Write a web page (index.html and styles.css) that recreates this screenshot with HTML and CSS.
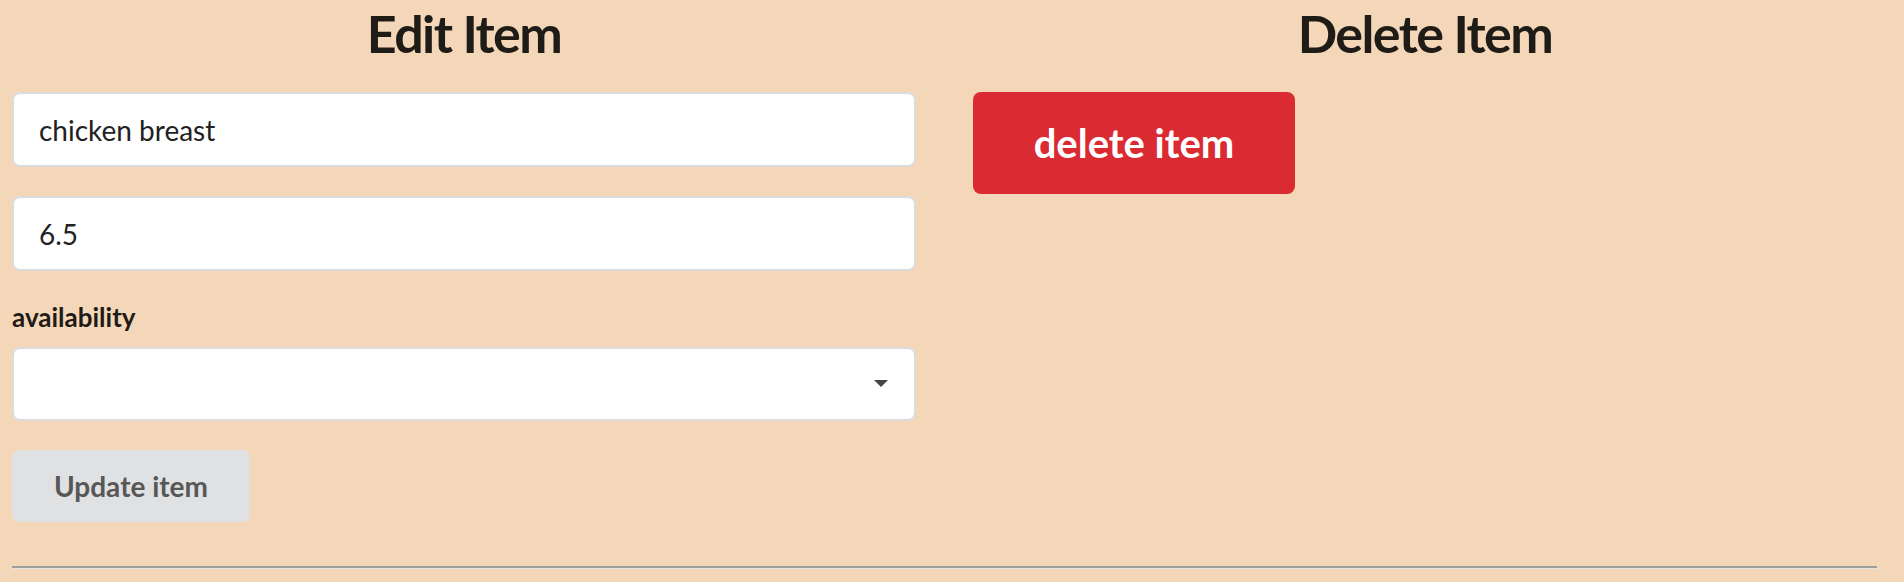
FILE: index.html
```html
<!DOCTYPE html>
<html lang="en">
<head>
<meta charset="utf-8">
<title>Edit Item</title>
<link rel="stylesheet" href="styles.css">
</head>
<body>
<div class="page">
  <div class="columns">
    <section class="col">
      <h2 class="title">Edit Item</h2>
      <form class="form">
        <input class="field" type="text" value="chicken breast">
        <input class="field" type="text" value="6.5">
        <label class="label" for="avail">availability</label>
        <div class="select-wrap">
          <select class="field select" id="avail">
            <option value=""></option>
            <option value="yes">available</option>
            <option value="no">unavailable</option>
          </select>
        </div>
        <div class="actions">
          <button type="button" class="btn btn-update">Update item</button>
        </div>
      </form>
    </section>
    <section class="col">
      <h2 class="title">Delete Item</h2>
      <div class="actions-right">
        <button type="button" class="btn btn-delete">delete item</button>
      </div>
    </section>
  </div>
  <hr class="rule">
</div>
</body>
</html>
```
FILE: styles.css
```css
* { box-sizing: border-box; }

html, body {
  margin: 0;
  padding: 0;
  background: #f4d7b9;
}

body {
  font-family: Lato, "Noto Sans", sans-serif;
  color: #211d18;
}

.page {
  padding: 2px 27px 0 12px;
}

.columns {
  display: grid;
  grid-template-columns: 1fr 1fr;
  column-gap: 57px;
}

.col {
  display: flex;
  flex-direction: column;
  min-width: 0;
}

.title {
  margin: 0;
  font-size: 52px;
  line-height: 1.2;
  font-weight: 700;
  letter-spacing: -1.6px;
  text-align: center;
  color: #1f1b16;
}

.form {
  display: flex;
  flex-direction: column;
  margin-top: 28px;
}

.field {
  display: block;
  width: 100%;
  height: 75px;
  margin: 0 0 29px 0;
  padding: 0 25px;
  font-family: Lato, "Noto Sans", sans-serif;
  font-size: 28px;
  color: #222222;
  background: #ffffff;
  border: 2px solid #dcdcdc;
  border-radius: 8px;
  outline: none;
}

.field:nth-of-type(2) {
  margin-bottom: 27px;
}

.label {
  font-size: 26px;
  line-height: 1.5;
  font-weight: 700;
  color: #1f1b16;
  margin-bottom: 10px;
}

.select-wrap {
  position: relative;
}

.select {
  appearance: none;
  -webkit-appearance: none;
  height: 74px;
  margin-bottom: 29px;
}

.select-wrap::after {
  content: "";
  position: absolute;
  right: 28px;
  top: 33px;
  width: 0;
  height: 0;
  border-left: 7px solid transparent;
  border-right: 7px solid transparent;
  border-top: 7px solid #454545;
  pointer-events: none;
}

.actions {
  display: flex;
}

.btn {
  font-family: Lato, "Noto Sans", sans-serif;
  font-weight: 700;
  line-height: 1.5;
  border: none;
  border-radius: 8px;
  cursor: pointer;
}

.btn-update {
  font-size: 28px;
  height: 72px;
  padding: 0 42px;
  background: #e0e1e3;
  color: #575757;
}

.actions-right {
  display: flex;
  margin-top: 28px;
}

.btn-delete {
  font-size: 40px;
  height: 102px;
  width: 322px;
  padding: 0;
  background: #da2a32;
  color: #ffffff;
}

.rule {
  margin: 44px 0 0 0;
  height: 0;
  border: none;
  border-top: 2px solid #9e9e9e;
  border-bottom: 1px solid #e4e4e4;
}
```
